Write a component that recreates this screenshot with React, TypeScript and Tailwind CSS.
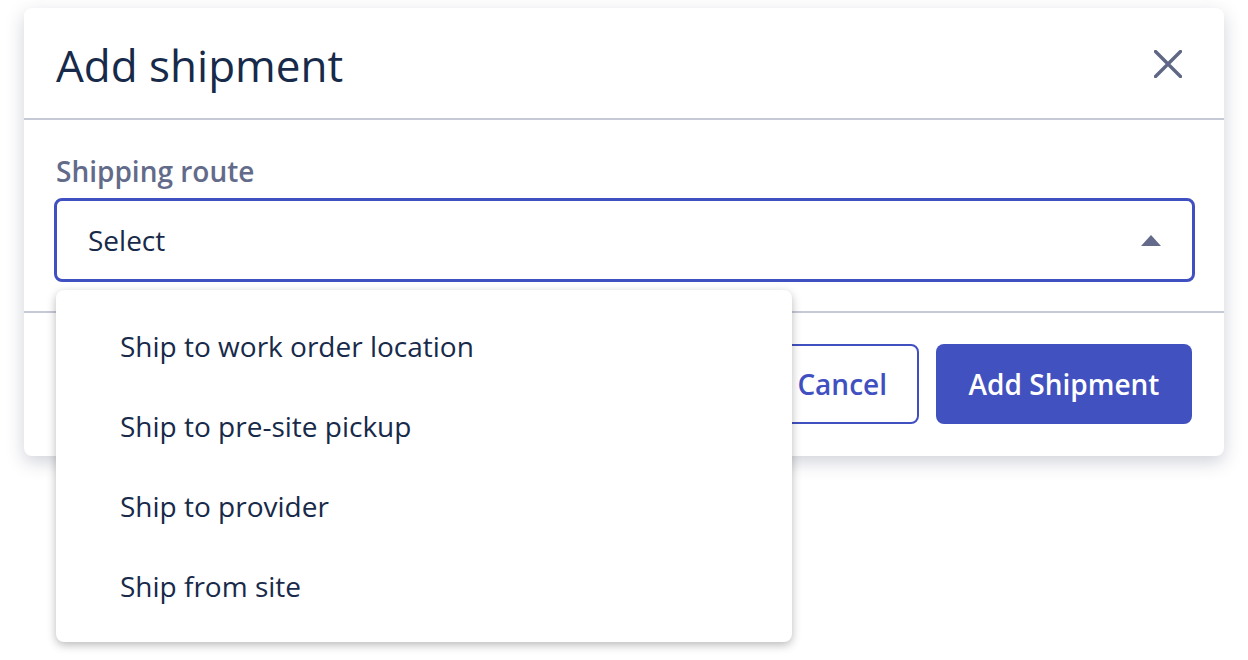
import React from "react";

const options = [
  "Ship to work order location",
  "Ship to pre-site pickup",
  "Ship to provider",
  "Ship from site",
];

const App: React.FC = () => {
  return (
    <div
      className="min-h-[660px] w-[1248px] bg-white pl-[24px] pt-[8px]"
      style={{ fontFamily: '"Open Sans", "Noto Sans", sans-serif' }}
    >
      <div className="w-[1200px] rounded-[8px] bg-white shadow-[0_6px_18px_rgba(40,50,80,0.22)]">
        {/* header */}
        <div className="flex h-[112px] items-center justify-between border-b-2 border-[#c6c9d6] pl-[32px] pr-[42px]">
          <h1 className="mt-[4px] text-[44px] leading-[52px] text-[#172a4a]">Add shipment</h1>
          <svg width="28" height="28" viewBox="0 0 28 28" className="mt-[2px]">
            <path
              d="M1.5 1.5 L26.5 26.5 M26.5 1.5 L1.5 26.5"
              stroke="#5f6785"
              strokeWidth="3.4"
              strokeLinecap="round"
            />
          </svg>
        </div>

        {/* body */}
        <div className="border-b-2 border-[#c6c9d6] pb-[29px] pl-[30px] pr-[29px] pt-[32px]">
          <div className="mb-[8px] ml-[2px] text-[28px] font-semibold leading-[38px] text-[#636b8a]">
            Shipping route
          </div>
          <div className="relative">
            <div className="flex h-[84px] items-center justify-between rounded-[8px] border-[3px] border-[#4150c0] pl-[31px] pr-[31px]">
              <span className="text-[28px] text-[#172a4a]">Select</span>
              <svg width="20" height="11" viewBox="0 0 20 11">
                <path d="M10 0 L20 11 L0 11 Z" fill="#646b8a" />
              </svg>
            </div>

            {/* dropdown menu */}
            <div className="absolute left-[2px] top-[92px] z-10 w-[736px] rounded-[8px] bg-white py-[16px] shadow-[0_3px_10px_rgba(0,0,0,0.28)]">
              {options.map((opt) => (
                <div
                  key={opt}
                  className="flex h-[80px] items-center pl-[64px] text-[28px] text-[#172a4a]"
                >
                  {opt}
                </div>
              ))}
            </div>
          </div>
        </div>

        {/* footer */}
        <div className="flex justify-end gap-[17px] px-[32px] pb-[32px] pt-[31px]">
          <button className="h-[80px] rounded-[8px] border-2 border-[#4150c0] bg-white px-[30px] text-[28px] font-semibold text-[#4150c0]">
            Cancel
          </button>
          <button className="h-[80px] w-[256px] rounded-[8px] bg-[#4151bf] text-[28px] font-semibold text-white">
            Add Shipment
          </button>
        </div>
      </div>
    </div>
  );
};

export default App;
